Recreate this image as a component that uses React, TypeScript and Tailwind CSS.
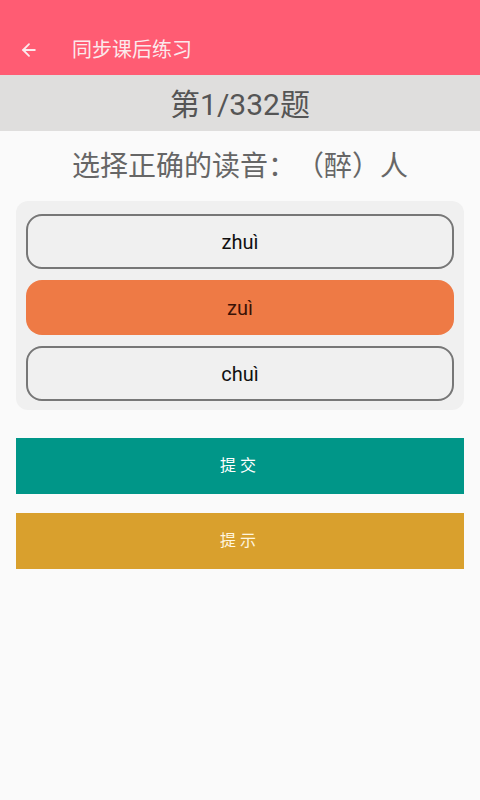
import { ArrowLeft } from "lucide-react";

const options = [
  { label: "zhuì", selected: false },
  { label: "zuì", selected: true },
  { label: "chuì", selected: false },
];

export default function App() {
  return (
    <div className="min-h-[800px] bg-[#fafafa] font-['Roboto','Noto_Sans_CJK_SC',sans-serif] [text-spacing-trim:space-all]">
      {/* toolbar */}
      <header className="h-[75px] bg-[#ff5c73] flex items-end pb-[15px]">
        <div className="flex items-center h-[20px]">
          <ArrowLeft className="ml-[19px] h-[20px] w-[20px] text-[#fbe9ec]" strokeWidth={2.2} />
          <span className="ml-[33px] text-[20px] text-[#fbe9ec] leading-none">同步课后练习</span>
        </div>
      </header>

      <div className="h-[56px] bg-[#dfdedd] flex items-center justify-center pt-[3px]">
        <span className="text-[30px] text-[#555555] leading-none">第1/332题</span>
      </div>

      <p className="mt-[21px] text-center text-[28px] text-[#666666] leading-[30px]">
        选择正确的读音：（醉）人
      </p>

      <div className="mx-[16px] mt-[19px] rounded-[12px] bg-[#f0f0f0] pt-[13px] pb-[9px] px-[10px] flex flex-col gap-[11px]">
        {options.map((o) => (
          <div
            key={o.label}
            className={
              o.selected
                ? "h-[55px] rounded-[16px] bg-[#ee7a45] flex items-center justify-center text-[20px] text-[#3a1206]"
                : "h-[55px] rounded-[16px] border-2 border-[#777777] bg-[#f0f0f0] flex items-center justify-center text-[20px] text-[#111111]"
            }
          >
            {o.label}
          </div>
        ))}
      </div>

      <div className="mx-[16px] mt-[28px] flex flex-col gap-[19px]">
        <button className="h-[56px] bg-[#009688] text-white text-[16px] tracking-[4px]">提交</button>
        <button className="h-[56px] bg-[#d9a02d] text-[#fff6e0] text-[16px] tracking-[4px]">提示</button>
      </div>
    </div>
  );
}
